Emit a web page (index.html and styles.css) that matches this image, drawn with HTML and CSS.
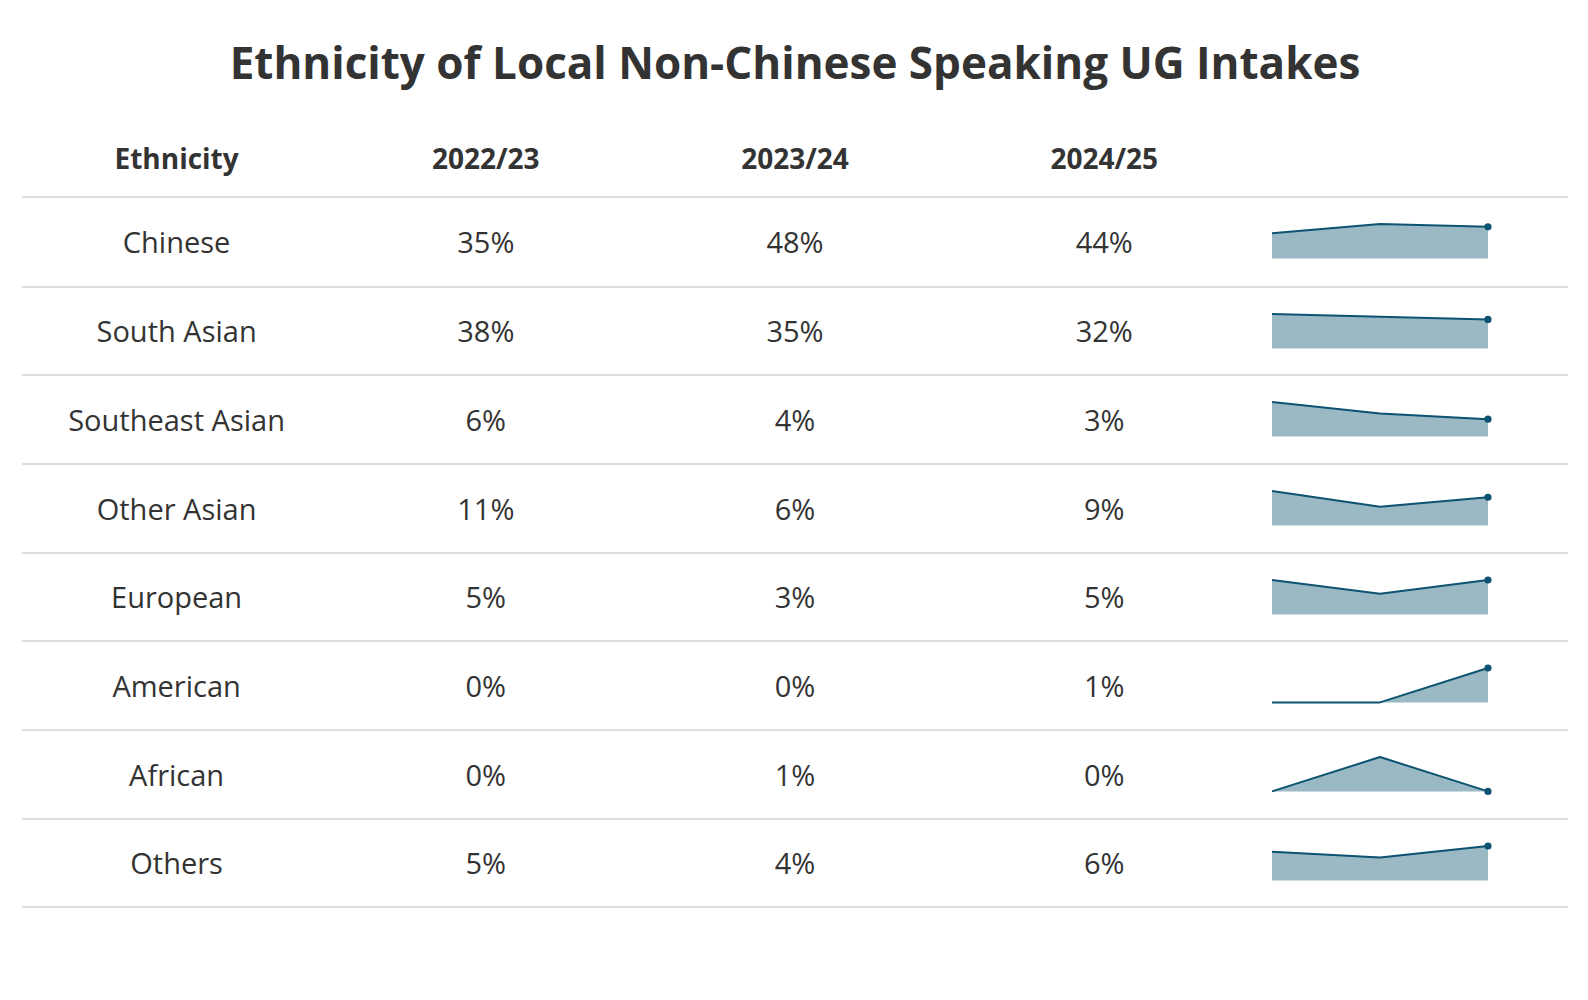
FILE: index.html
```html
<!DOCTYPE html>
<html lang="en">
<head>
<meta charset="utf-8">
<title>Ethnicity of Local Non-Chinese Speaking UG Intakes</title>
<link rel="stylesheet" href="styles.css">
</head>
<body>
<div class="page">
  <h1 class="title">Ethnicity of Local Non-Chinese Speaking UG Intakes</h1>
  <div class="table">
    <div class="row head">
      <div class="cell">Ethnicity</div>
      <div class="cell">2022/23</div>
      <div class="cell">2023/24</div>
      <div class="cell">2024/25</div>
      <div class="cell spark"></div>
    </div>

    <div class="row">
      <div class="cell">Chinese</div><div class="cell">35%</div><div class="cell">48%</div><div class="cell">44%</div>
      <div class="cell spark"><svg class="sl" viewBox="0 0 216 34.4"><path class="area" d="M0 34.4 L0 9.32 L108 0 L216 2.87 L216 34.4 Z"/><polyline class="line" points="0,9.32 108,0 216,2.87"/><circle class="dot" cx="216" cy="2.87" r="3.6"/></svg></div>
    </div>
    <div class="row">
      <div class="cell">South Asian</div><div class="cell">38%</div><div class="cell">35%</div><div class="cell">32%</div>
      <div class="cell spark"><svg class="sl" viewBox="0 0 216 34.4"><path class="area" d="M0 34.4 L0 0 L108 2.72 L216 5.43 L216 34.4 Z"/><polyline class="line" points="0,0 108,2.72 216,5.43"/><circle class="dot" cx="216" cy="5.43" r="3.6"/></svg></div>
    </div>
    <div class="row">
      <div class="cell">Southeast Asian</div><div class="cell">6%</div><div class="cell">4%</div><div class="cell">3%</div>
      <div class="cell spark"><svg class="sl" viewBox="0 0 216 34.4"><path class="area" d="M0 34.4 L0 0 L108 11.47 L216 17.2 L216 34.4 Z"/><polyline class="line" points="0,0 108,11.47 216,17.2"/><circle class="dot" cx="216" cy="17.2" r="3.6"/></svg></div>
    </div>
    <div class="row">
      <div class="cell">Other Asian</div><div class="cell">11%</div><div class="cell">6%</div><div class="cell">9%</div>
      <div class="cell spark"><svg class="sl" viewBox="0 0 216 34.4"><path class="area" d="M0 34.4 L0 0 L108 15.64 L216 6.25 L216 34.4 Z"/><polyline class="line" points="0,0 108,15.64 216,6.25"/><circle class="dot" cx="216" cy="6.25" r="3.6"/></svg></div>
    </div>
    <div class="row">
      <div class="cell">European</div><div class="cell">5%</div><div class="cell">3%</div><div class="cell">5%</div>
      <div class="cell spark"><svg class="sl" viewBox="0 0 216 34.4"><path class="area" d="M0 34.4 L0 0 L108 13.76 L216 0 L216 34.4 Z"/><polyline class="line" points="0,0 108,13.76 216,0"/><circle class="dot" cx="216" cy="0" r="3.6"/></svg></div>
    </div>
    <div class="row">
      <div class="cell">American</div><div class="cell">0%</div><div class="cell">0%</div><div class="cell">1%</div>
      <div class="cell spark"><svg class="sl" viewBox="0 0 216 34.4"><path class="area" d="M0 34.4 L108 34.4 L216 0 L216 34.4 Z"/><polyline class="line" points="0,34.4 108,34.4 216,0"/><circle class="dot" cx="216" cy="0" r="3.6"/></svg></div>
    </div>
    <div class="row">
      <div class="cell">African</div><div class="cell">0%</div><div class="cell">1%</div><div class="cell">0%</div>
      <div class="cell spark"><svg class="sl" viewBox="0 0 216 34.4"><path class="area" d="M0 34.4 L108 0 L216 34.4 Z"/><polyline class="line" points="0,34.4 108,0 216,34.4"/><circle class="dot" cx="216" cy="34.4" r="3.6"/></svg></div>
    </div>
    <div class="row">
      <div class="cell">Others</div><div class="cell">5%</div><div class="cell">4%</div><div class="cell">6%</div>
      <div class="cell spark"><svg class="sl" viewBox="0 0 216 34.4"><path class="area" d="M0 34.4 L0 5.73 L108 11.47 L216 0 L216 34.4 Z"/><polyline class="line" points="0,5.73 108,11.47 216,0"/><circle class="dot" cx="216" cy="0" r="3.6"/></svg></div>
    </div>
  </div>
</div>
</body>
</html>
```

FILE: styles.css
```css
* { box-sizing: border-box; }
html, body { margin: 0; padding: 0; background: #ffffff; }
body {
  font-family: "Open Sans", "Liberation Sans", sans-serif;
  color: #333333;
  width: 1588px;
  height: 1000px;
  overflow: hidden;
}
.page {
  padding: 0 20px 0 22px;
}
.title {
  margin: 0;
  height: 119.5px;
  padding-top: 40.3px;
  font-size: 44px;
  line-height: 44px;
  font-weight: 700;
  text-align: center;
  color: #333333;
}
.table {
  display: flex;
  flex-direction: column;
}
.row {
  display: grid;
  grid-template-columns: repeat(5, 1fr);
  align-items: center;
  height: 88.7px;
  border-bottom: 2px solid #dedede;
}
.row.head {
  height: 78px;
}
.row.head + .row {
  height: 90px;
}
.cell {
  text-align: center;
  font-size: 29px;
  line-height: 29px;
  font-weight: 400;
}
.head .cell {
  font-size: 28px;
  line-height: 28px;
  font-weight: 700;
}
.cell.spark {
  text-align: left;
  padding-left: 13px;
  display: flex;
  align-items: center;
}
.sl {
  width: 216px;
  height: 34.4px;
  overflow: visible;
  display: block;
}
.area { fill: #9bb9c4; }
.line { fill: none; stroke: #0c5371; stroke-width: 2; stroke-linejoin: round; }
.dot { fill: #0c5371; }
```
